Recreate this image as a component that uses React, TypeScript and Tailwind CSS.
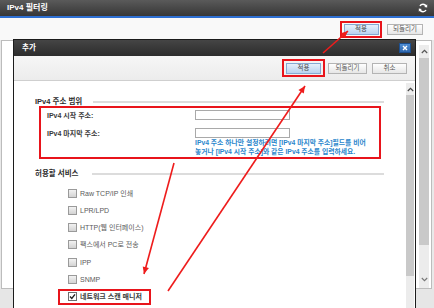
import React from 'react';

const font = "font-['Liberation_Sans','Noto_Sans_CJK_KR',sans-serif]";

type BtnProps = { children: React.ReactNode; primary?: boolean; w: string };

const Btn: React.FC<BtnProps> = ({ children, primary, w }) => (
  <div
    className={
      primary
        ? `${w} h-[11px] flex items-center justify-center text-[6.5px] leading-none text-[#4a4a4a] border border-[#86a9d3] bg-gradient-to-b from-[#e6f0fb] to-[#b9d3f0]`
        : `${w} h-[11px] flex items-center justify-center text-[6.5px] leading-none text-[#555] border border-[#b4b4b4] bg-gradient-to-b from-[#ffffff] to-[#e6e6e6]`
    }
  >
    {children}
  </div>
);

const Checkbox: React.FC<{ checked?: boolean }> = ({ checked }) => (
  <span
    className={
      checked
        ? 'w-[9px] h-[9px] border border-[#6d6d6d] bg-white flex items-center justify-center'
        : 'w-[9px] h-[9px] border border-[#9a9a9a] bg-gradient-to-b from-[#f2f2f2] to-[#d3d3d3]'
    }
  >
    {checked && (
      <svg width="7" height="7" viewBox="0 0 7 7">
        <path d="M1 3.5 L2.8 5.4 L6 1.4" fill="none" stroke="#222" strokeWidth="1.4" />
      </svg>
    )}
  </span>
);

const arrowHead = (x1: number, y1: number, x2: number, y2: number) => {
  const a = Math.atan2(y2 - y1, x2 - x1);
  const len = 7;
  const half = 3.2;
  const bx = x2 - len * Math.cos(a);
  const by = y2 - len * Math.sin(a);
  const px = -Math.sin(a) * half;
  const py = Math.cos(a) * half;
  return `${x2},${y2} ${bx + px},${by + py} ${bx - px},${by - py}`;
};

const arrows = [
  { x1: 323, y1: 53, x2: 348, y2: 31 },
  { x1: 168, y1: 291, x2: 305, y2: 86 },
  { x1: 174, y1: 163, x2: 144, y2: 274 },
];

const services = ['Raw TCP/IP 인쇄', 'LPR/LPD', 'HTTP(웹 인터페이스)', '팩스에서 PC로 전송', 'IPP', 'SNMP'];

export default function App() {
  return (
    <div className={`relative w-[434px] h-[308px] overflow-hidden bg-[#e9e9e9] ${font}`}>
      {/* outer title */}
      <div className="h-[16px] flex items-center justify-between pl-[7px] pr-[6px] bg-gradient-to-b from-[#5a5a5a] to-[#373737]">
        <span className="text-white text-[8px] font-bold leading-none">IPv4 필터링</span>
        <svg width="10" height="10" viewBox="0 0 10 10">
          <path d="M8 3.2 A3.4 3.4 0 0 0 2 3" fill="none" stroke="#fff" strokeWidth="1.5" />
          <path d="M2 6.8 A3.4 3.4 0 0 0 8 7" fill="none" stroke="#fff" strokeWidth="1.5" />
          <polygon points="9.2,1.2 9.2,4.4 6.2,4" fill="#fff" />
          <polygon points="0.8,8.8 0.8,5.6 3.8,6" fill="#fff" />
        </svg>
      </div>
      <div className="h-[2px] bg-[#2d6fd2]" />

      {/* outer toolbar */}
      <div className="h-[22px] bg-[#f9f9f9] flex items-center justify-end pr-[11px] gap-[5px]">
        <div className="border-2 border-[#e8141b] px-[1.5px] py-[1px]">
          <Btn primary w="w-[35px]">적용</Btn>
        </div>
        <Btn w="w-[36px]">되돌리기</Btn>
      </div>

      {/* outer content */}
      <div className="h-[249px] ml-[1px] mr-[2px] border border-[#bcbcbc] bg-white flex justify-end pt-[4px] pr-[2px]">
        <div className="w-[10px] flex flex-col bg-[#ececec]">
          <div className="h-[13px] flex items-center justify-center text-[#555]">
            <svg width="7" height="5" viewBox="0 0 7 5">
              <path d="M0.8 4 L3.5 1.3 L6.2 4" fill="none" stroke="#555" strokeWidth="1.2" />
            </svg>
          </div>
          <div className="h-[187px] bg-[#c9c9c9]" />
          <div className="flex-1 flex items-end justify-center pb-[6px]">
            <svg width="7" height="5" viewBox="0 0 7 5">
              <path d="M0.8 1 L3.5 3.7 L6.2 1" fill="none" stroke="#777" strokeWidth="1.1" />
            </svg>
          </div>
        </div>
      </div>
      <div className="flex-1 h-[19px] bg-[#e6e6e6]" />

      {/* dialog */}
      <div className="absolute left-[13px] top-[39px] w-[403px] h-[290px] border border-[#1c1c1c] bg-white flex flex-col">
        <div className="h-[16px] flex items-center justify-between pl-[8px] pr-[4px] bg-gradient-to-b from-[#454545] to-[#2c2c2c]">
          <span className="text-white text-[7.5px] font-bold leading-none">추가</span>
          <div className="w-[12px] h-[10px] bg-gradient-to-b from-[#4f8fd6] to-[#2d66ad] border border-[#1d4f8e] flex items-center justify-center">
            <svg width="6" height="6" viewBox="0 0 6 6">
              <path d="M1 1 L5 5 M5 1 L1 5" stroke="#fff" strokeWidth="1.4" />
            </svg>
          </div>
        </div>
        <div className="h-[25px] bg-gradient-to-b from-[#f6f6f6] to-[#ececec] border-b border-[#cfcfcf] flex items-center justify-end pr-[8px]">
          <div className="border-2 border-[#e8141b] px-[2px] py-[1.5px]">
            <Btn primary w="w-[35px]">적용</Btn>
          </div>
          <div className="ml-[3px]">
            <Btn w="w-[39px]">되돌리기</Btn>
          </div>
          <div className="ml-[5px]">
            <Btn w="w-[35px]">취소</Btn>
          </div>
        </div>

        <div className="flex-1 flex">
          <div className="flex-1 pl-[21px] pr-[22px] pt-[17px] flex flex-col">
            <div className="h-[8px] flex items-center gap-[11px]">
              <span className="text-[7.5px] font-bold text-[#2c2c2c] leading-none whitespace-nowrap">IPv4 주소 범위</span>
              <div className="flex-1 h-[1.5px] bg-[#dcdcdc]" />
            </div>

            <div className="ml-[4px] mr-[3px] h-[53px] border-2 border-[#e8141b] pl-[6px] pt-[2px]">
              <div className="flex items-center h-[10px]">
                <span className="w-[148px] text-[7px] font-bold text-[#3a3a3a] leading-none">IPv4 시작 주소:</span>
                <div className="w-[95px] h-[10px] border border-[#a9a9a9] bg-white" />
              </div>
              <div className="flex items-center h-[10px] mt-[8px]">
                <span className="w-[148px] text-[7px] font-bold text-[#3a3a3a] leading-none">IPv4 마지막 주소:</span>
                <div className="w-[95px] h-[10px] border border-[#a9a9a9] bg-white" />
              </div>
              <div className="ml-[148px] mt-[1px] text-[6.8px] leading-[8.5px] font-bold text-[#2a86cc] whitespace-nowrap">
                <div>IPv4 주소 하나만 설정하려면 [IPv4 마지막 주소]필드를 비어</div>
                <div>놓거나 [IPv4 시작 주소]와 같은 IPv4 주소를 입력하세요.</div>
              </div>
            </div>

            <div className="h-[8px] mt-[11px] flex items-center gap-[14px]">
              <span className="text-[7.5px] font-bold text-[#2c2c2c] leading-none whitespace-nowrap">허용할 서비스</span>
              <div className="flex-1 h-[1.5px] bg-[#dcdcdc]" />
            </div>

            <div className="mt-[10.5px] pl-[33px] flex flex-col gap-[8.3px]">
              {services.map((s) => (
                <div key={s} className="h-[9px] flex items-center gap-[3px]">
                  <Checkbox />
                  <span className="text-[7px] leading-none text-[#5a5a5a] whitespace-nowrap">{s}</span>
                </div>
              ))}
              <div className="relative h-[9px] flex items-center gap-[3px]">
                <Checkbox checked />
                <span className="text-[7px] leading-none font-bold text-[#3a3a3a] whitespace-nowrap">네트워크 스캔 매니저</span>
                <span className="absolute left-[-10px] top-[-3.5px] w-[93px] h-[16px] border-2 border-[#e8141b]" />
              </div>
            </div>
          </div>

          {/* inner scrollbar */}
          <div className="w-[8px] mr-[1px] mt-[2px] flex flex-col bg-[#ececec]">
            <div className="h-[12px] flex items-center justify-center">
              <svg width="7" height="5" viewBox="0 0 7 5">
                <path d="M0.8 4 L3.5 1.3 L6.2 4" fill="none" stroke="#444" strokeWidth="1.2" />
              </svg>
            </div>
            <div className="h-[181px] bg-[#c9c9c9]" />
          </div>
        </div>
      </div>

      {/* annotation arrows */}
      <svg className="absolute inset-0 pointer-events-none" width="434" height="308">
        {arrows.map((a, i) => (
          <g key={i}>
            <line x1={a.x1} y1={a.y1} x2={a.x2} y2={a.y2} stroke="#ee1c1c" strokeWidth="1.6" />
            <polygon points={arrowHead(a.x1, a.y1, a.x2, a.y2)} fill="#ee1c1c" />
          </g>
        ))}
      </svg>
    </div>
  );
}
